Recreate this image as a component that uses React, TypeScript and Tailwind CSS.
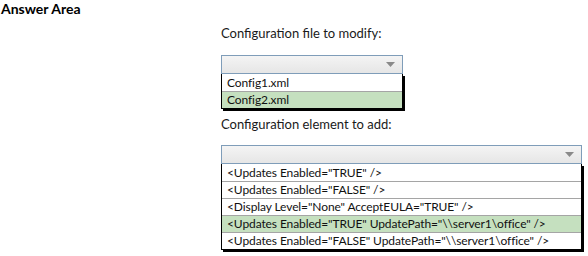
import React from 'react';

const font = { fontFamily: 'Lato, "Noto Sans", sans-serif' };

type DropProps = {
    width: string;
    options: string[];
    selected: number;
};

const Arrow = () => (
    <svg width="9" height="5" viewBox="0 0 9 5" className="block">
        <path d="M0 0 L9 0 L4.5 5 Z" fill="#8a8a8a" />
    </svg>
);

const Dropdown = ({ width, options, selected }: DropProps) => (
    <div className={`${width} flex flex-col`}>
        <div className="h-[19px] border border-[#7f9db9] bg-gradient-to-b from-[#f4f4f4] to-[#e6e6e6] flex items-center justify-end pr-[7px]">
            <Arrow />
        </div>
        <div className="border border-t-0 border-black shadow-[2px_2px_0_0_#000] bg-white">
            {options.map((opt, i) => (
                <div
                    key={i}
                    className={`h-[17px] flex items-center px-[5px] text-[12px] tracking-[-0.1px] text-[#111] leading-none whitespace-nowrap ${i > 0 ? 'border-t border-[#a5a5a5]' : ''} ${i === selected ? 'bg-[#c5e0bf]' : ''}`}
                >
                    {opt}
                </div>
            ))}
        </div>
    </div>
);

const App = () => {
    return (
        <div className="w-[588px] h-[256px] bg-white relative" style={font}>
            <div className="pl-[1px] pt-[1px] text-[14px] font-bold text-black leading-[15px]">Answer Area</div>
            <div className="ml-[221px] flex flex-col">
                <div className="mt-[9px] text-[13px] text-[#1a1a1a] leading-[16px]">Configuration file to modify:</div>
                <div className="mt-[14px]">
                    <Dropdown width="w-[182px]" options={['Config1.xml', 'Config2.xml']} selected={1} />
                </div>
                <div className="mt-[7px] text-[13px] text-[#1a1a1a] leading-[16px]">Configuration element to add:</div>
                <div className="mt-[13px]">
                    <Dropdown
                        width="w-[361px]"
                        options={[
                            '<Updates Enabled="TRUE" />',
                            '<Updates Enabled="FALSE" />',
                            '<Display Level="None" AcceptEULA="TRUE" />',
                            '<Updates Enabled="TRUE" UpdatePath="\\\\server1\\office" />',
                            '<Updates Enabled="FALSE" UpdatePath="\\\\server1\\office" />',
                        ]}
                        selected={3}
                    />
                </div>
            </div>
        </div>
    );
};

export default App;
